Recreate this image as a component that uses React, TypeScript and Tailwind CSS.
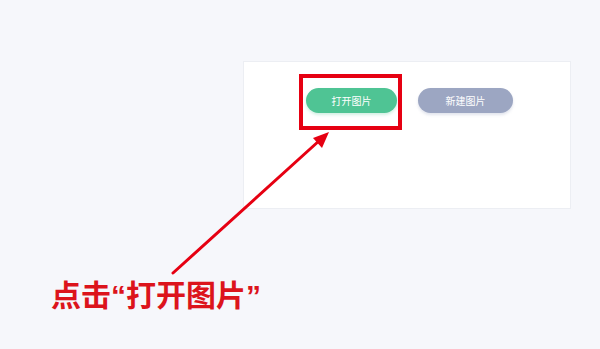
export default function App() {
  return (
    <div
      className="relative w-[600px] h-[349px] overflow-hidden bg-[#f6f7fb]"
      style={{ fontFamily: '"Noto Sans CJK SC", "Noto Sans", sans-serif' }}
    >
      {/* Card */}
      <div className="ml-[243px] mt-[61px] w-[328px] h-[148px] bg-white border border-[#eceef3]">
        <div className="flex gap-[21px] pl-[62px] pt-[26px]">
          <button className="w-[91px] h-[25px] rounded-full bg-[#4fc494] text-white text-[10px] shadow-[0_2px_3px_rgba(79,196,148,0.25)]">
            打开图片
          </button>
          <button className="w-[95px] h-[25px] rounded-full bg-[#9ca6c2] text-white text-[10px] shadow-[0_2px_3px_rgba(156,166,194,0.3)]">
            新建图片
          </button>
        </div>
      </div>

      {/* Highlight box */}
      <div className="absolute left-[299px] top-[74px] w-[103px] h-[56px] border-[4px] border-[#e60012]" />

      {/* Arrow */}
      <svg className="absolute left-0 top-0" width="600" height="349" viewBox="0 0 600 349">
        <line x1="173" y1="273" x2="320" y2="140" stroke="#e60012" strokeWidth="3" strokeLinecap="round" />
        <polygon points="329,132 313,138 322,148" fill="#e60012" />
      </svg>

      {/* Caption */}
      <div
        className="absolute left-[51px] top-[281px] text-[30px] font-bold leading-none text-[#dc141c]"
        style={{ fontFamily: '"Liberation Sans", "Noto Sans CJK SC", sans-serif' }}
      >
        点击“打开图片”
      </div>
    </div>
  )
}
